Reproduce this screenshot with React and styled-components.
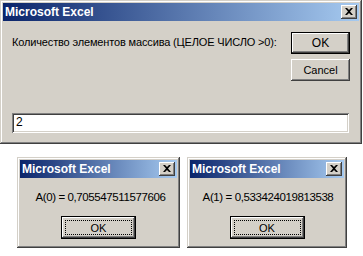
import React from "react";
import styled, { createGlobalStyle } from "styled-components";

const Global = createGlobalStyle`
  html, body { margin: 0; padding: 0; background: #ffffff; }
  body { font-family: "Liberation Sans", Arial, sans-serif; font-size: 11px; color: #000; }
`;

const Page = styled.div`
  display: flex;
  flex-direction: column;
  width: 363px;
  height: 256px;
  overflow: hidden;
`;

const Window = styled.div`
  box-sizing: border-box;
  width: ${(p) => p.$w}px;
  height: ${(p) => p.$h}px;
  padding: 3px;
  background: #d4d0c8;
  display: flex;
  flex-direction: column;
  box-shadow: inset -1px -1px #404040, inset 1px 1px #d4d0c8,
    inset -2px -2px #808080, inset 2px 2px #ffffff;
`;

const TitleBar = styled.div`
  height: 18px;
  flex: none;
  display: flex;
  align-items: center;
  justify-content: space-between;
  padding: 0 2px 0 2px;
  background: linear-gradient(to right, #0a246a, #a6caf0);
`;

const Title = styled.span`
  color: #ffffff;
  font-weight: bold;
  font-size: 12px;
  line-height: 14px;
  white-space: nowrap;
`;

const CloseButton = styled.div`
  width: 16px;
  height: 14px;
  box-sizing: border-box;
  background: #d4d0c8;
  display: flex;
  align-items: center;
  justify-content: center;
  box-shadow: inset -1px -1px #404040, inset 1px 1px #ffffff,
    inset -2px -2px #808080, inset 2px 2px #d4d0c8;
  svg { display: block; margin-top: -1px; }
`;

const Close = () => (
  <CloseButton>
    <svg width="8" height="7" viewBox="0 0 8 7">
      <path d="M0 0h2l2 2 2-2h2L5 3.5 8 7H6L4 5 2 7H0l3-3.5z" fill="#000" />
    </svg>
  </CloseButton>
);

const PromptBody = styled.div`
  display: flex;
  justify-content: space-between;
  padding: 11px 9px 0 9px;
`;

const Prompt = styled.div`
  margin-top: 4px;
  line-height: 13px;
  letter-spacing: -0.15px;
  white-space: nowrap;
`;

const ButtonColumn = styled.div`
  display: flex;
  flex-direction: column;
  gap: 5px;
`;

const Button = styled.div`
  box-sizing: border-box;
  width: ${(p) => p.$w}px;
  height: ${(p) => p.$h}px;
  display: flex;
  align-items: center;
  justify-content: center;
  background: #d4d0c8;
  font-size: ${(p) => p.$fs || 11}px;
  position: relative;
  ${(p) =>
    p.$default
      ? `box-shadow: inset 0 0 0 1px #000, inset -2px -2px #404040, inset 2px 2px #ffffff,
    inset -3px -3px #808080, inset 3px 3px #d4d0c8;`
      : `box-shadow: inset -1px -1px #404040, inset 1px 1px #ffffff,
    inset -2px -2px #808080, inset 2px 2px #d4d0c8;`}
`;

const FocusRing = styled.span`
  position: absolute;
  inset: 4px;
  border: 1px dotted #000;
`;

const Input = styled.div`
  box-sizing: border-box;
  margin: 32px 10px 0 9px;
  height: 20px;
  background: #ffffff;
  padding: 3px 0 0 4px;
  line-height: 13px;
  font-size: 12px;
  box-shadow: inset 1px 1px #808080, inset -1px -1px #ffffff,
    inset 2px 2px #404040, inset -2px -2px #d4d0c8;
`;

const Row = styled.div`
  display: flex;
  gap: 7px;
  margin-top: 13px;
  padding-left: 17px;
`;

const MessageBody = styled.div`
  display: flex;
  flex-direction: column;
  align-items: center;
  padding-top: 12px;
`;

const Message = styled.div`
  line-height: 14px;
  font-size: 11.5px;
  letter-spacing: -0.4px;
  white-space: nowrap;
  padding-left: ${(p) => p.$shift || 0}px;
`;

const MessageButtons = styled.div`
  margin-top: 12px;
`;

const MessageBox = ({ w, text, shift }) => (
  <Window $w={w} $h={91}>
    <TitleBar>
      <Title>Microsoft Excel</Title>
      <Close />
    </TitleBar>
    <MessageBody>
      <Message $shift={shift}>{text}</Message>
      <MessageButtons>
        <Button $w={75} $h={23} $default>
          <FocusRing />
          OK
        </Button>
      </MessageButtons>
    </MessageBody>
  </Window>
);

export default function App() {
  return (
    <Page>
      <Global />
      <Window $w={362} $h={144}>
        <TitleBar>
          <Title>Microsoft Excel</Title>
          <Close />
        </TitleBar>
        <PromptBody>
          <Prompt>Количество элементов массива (ЦЕЛОЕ ЧИСЛО &gt;0):</Prompt>
          <ButtonColumn>
            <Button $w={59} $h={22} $fs={12} $default>
              OK
            </Button>
            <Button $w={59} $h={22}>Cancel</Button>
          </ButtonColumn>
        </PromptBody>
        <Input>2</Input>
      </Window>
      <Row>
        <MessageBox w={163} text="A(0) = 0,705547511577606" shift={4} />
        <MessageBox w={160} text="A(1) = 0,533424019813538" shift={2} />
      </Row>
    </Page>
  );
}
